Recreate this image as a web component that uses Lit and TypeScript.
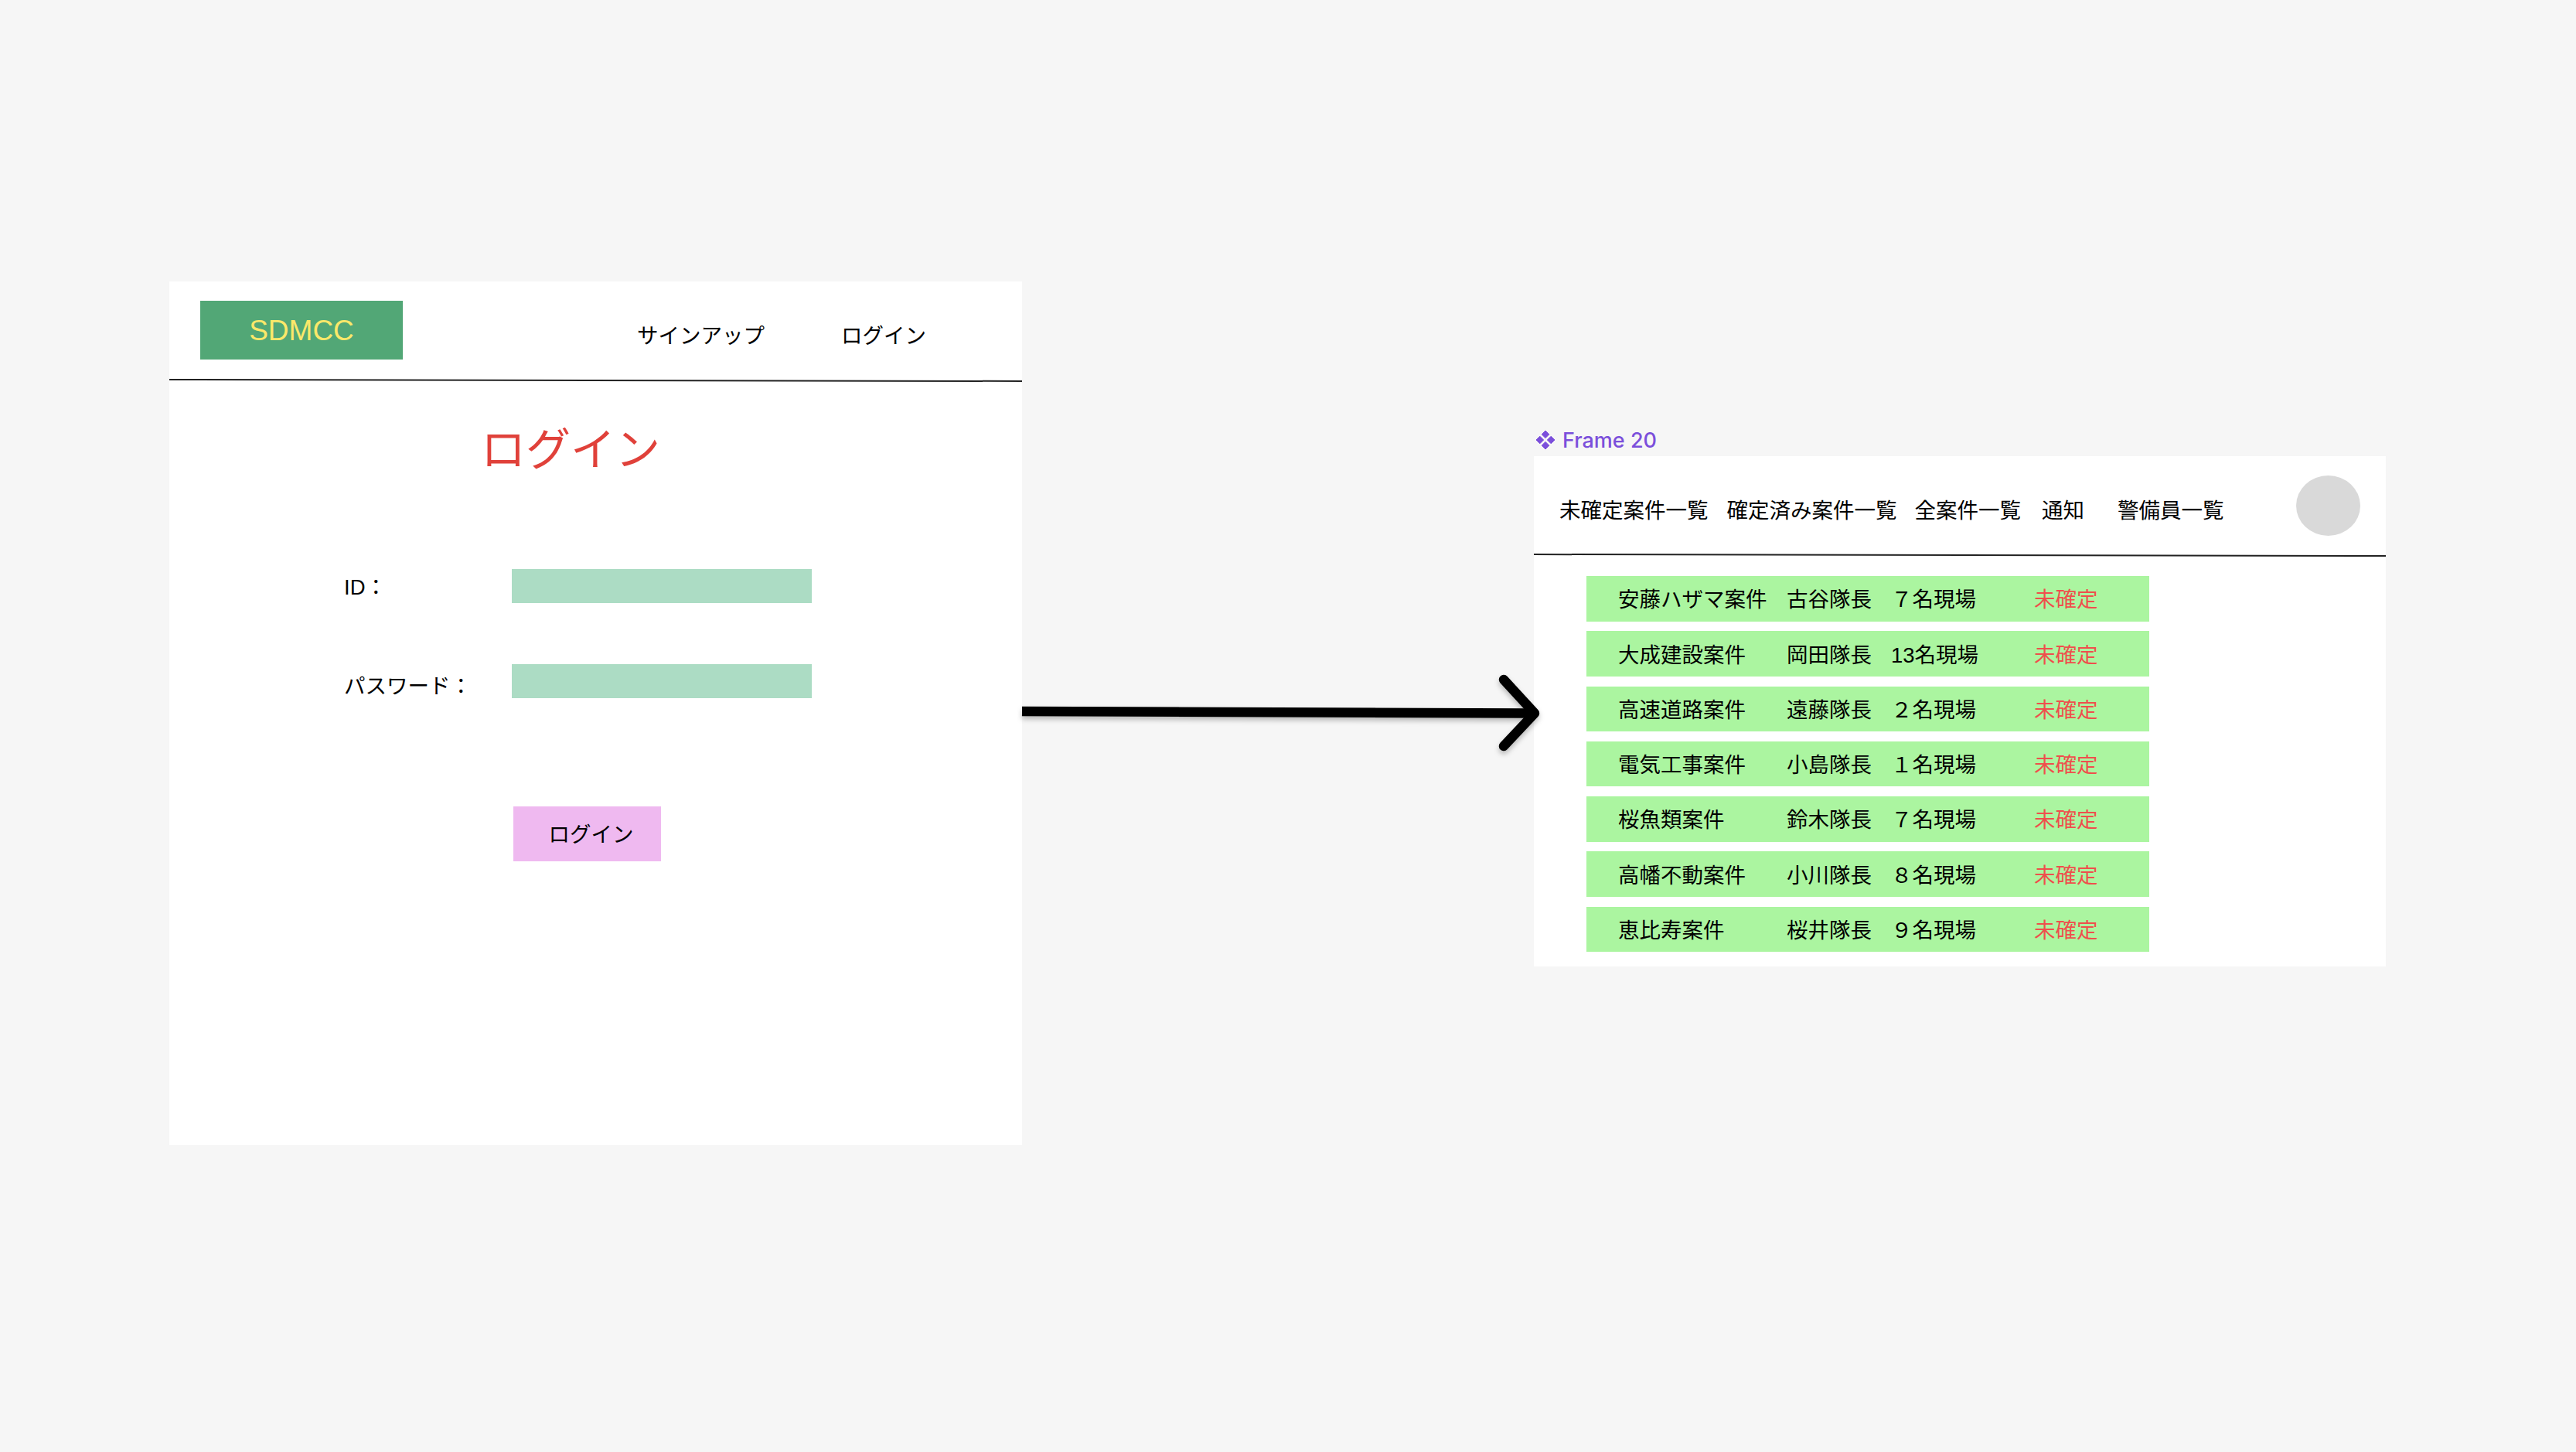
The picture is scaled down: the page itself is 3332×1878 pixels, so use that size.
import { LitElement, html, css } from 'lit';
import { customElement } from 'lit/decorators.js';

const CASES = [
  ['安藤ハザマ案件', '古谷隊長', '７名現場'],
  ['大成建設案件', '岡田隊長', '13名現場'],
  ['高速道路案件', '遠藤隊長', '２名現場'],
  ['電気工事案件', '小島隊長', '１名現場'],
  ['桜魚類案件', '鈴木隊長', '７名現場'],
  ['高幡不動案件', '小川隊長', '８名現場'],
  ['恵比寿案件', '桜井隊長', '９名現場'],
];

const NAV = ['未確定案件一覧', '確定済み案件一覧', '全案件一覧', '通知', '警備員一覧'];

@customElement('app-root')
export class AppRoot extends LitElement {
  static styles = css`
    :host {
      display: block;
      font-family: 'Liberation Sans', 'Noto Sans CJK JP', sans-serif;
      color: #000;
    }

    /* figma canvas: frames sit freely on it */
    .canvas {
      position: relative;
      width: 3332px;
      height: 1878px;
      background: #f6f6f6;
      overflow: hidden;
    }

    .frame {
      position: absolute;
      background: #fff;
      display: flex;
      flex-direction: column;
    }

    .login-frame {
      left: 219px;
      top: 364px;
      width: 1103px;
      height: 1117px;
    }

    .list-frame {
      left: 1984px;
      top: 590px;
      width: 1102px;
      height: 660px;
    }

    .frame-label {
      position: absolute;
      left: 1986px;
      top: 552px;
      height: 34px;
      display: flex;
      align-items: center;
      gap: 9px;
      font-family: Inter, sans-serif;
      font-size: 27px;
      font-weight: 500;
      color: #7b4fdb;
    }

    .frame-label svg {
      width: 26px;
      height: 26px;
      display: block;
    }

    /* goes after the list frame, its tip overlaps the frame edge */
    .arrow {
      position: absolute;
      left: 1310px;
      top: 865px;
      width: 700px;
      height: 115px;
      filter: drop-shadow(0 4px 3px rgba(0, 0, 0, 0.25));
    }

    .divider {
      height: 2px;
      background: #222;
      transform: rotate(0.1deg);
      flex: none;
    }

    .login-header {
      height: 127px;
      flex: none;
      display: flex;
      align-items: flex-start;
      padding-left: 40px;
    }

    .logo {
      width: 262px;
      height: 76px;
      margin-top: 25px;
      padding-top: 1px;
      box-sizing: border-box;
      display: flex;
      align-items: center;
      justify-content: center;
      background: #52a776;
      color: #fbe86a;
      font-size: 37px;
    }

    .login-nav {
      display: flex;
      gap: 99px;
      margin: 53px 0 0 303px;
      font-size: 27.5px;
      line-height: 36px;
    }

    .login-body {
      display: flex;
      flex-direction: column;
    }

    .title {
      margin: 53px 0 0 403px;
      font-size: 58px;
      line-height: 72px;
      color: #e0413a;
    }

    .form {
      margin: 118px 0 0 226px;
      display: grid;
      grid-template-columns: 217px 388px;
      row-gap: 79px;
      font-size: 27.5px;
    }

    .field-label {
      display: flex;
      align-items: center;
      padding-bottom: 3px;
    }

    .field-label.pw {
      padding: 6px 0 0;
    }

    .input {
      height: 44px;
      background: #acdcc4;
    }

    .submit {
      width: 191px;
      height: 71px;
      margin: 138px 0 0 445px;
      display: flex;
      align-items: center;
      justify-content: center;
      padding: 0 0 4px 10px;
      box-sizing: border-box;
      background: #efb9f0;
      font-size: 27.5px;
    }

    .list-header {
      height: 127px;
      flex: none;
      display: flex;
      align-items: flex-start;
      padding: 0 33px;
      font-size: 27.5px;
    }

    .list-nav {
      display: flex;
      margin-top: 51px;
      line-height: 40px;
    }

    .list-nav span:nth-child(1) {
      margin-right: 24px;
    }

    .list-nav span:nth-child(2) {
      margin-right: 23px;
    }

    .list-nav span:nth-child(3) {
      margin-right: 27px;
    }

    .list-nav span:nth-child(4) {
      margin-right: 43px;
    }

    .avatar {
      width: 83px;
      height: 78px;
      margin: 25px 0 0 auto;
      border-radius: 50%;
      background: #d9d9d9;
    }

    .rows {
      display: flex;
      flex-direction: column;
      gap: 12.8px;
      margin: 26px 0 0 68px;
      width: 728px;
    }

    .row {
      height: 58.5px;
      display: grid;
      grid-template-columns: 218px 135px 185px auto;
      align-items: center;
      padding: 0 0 2px 41px;
      box-sizing: border-box;
      background: #abf5a0;
      font-size: 27.5px;
    }

    .status {
      color: #ef4f4c;
    }
  `;

  render() {
    return html`
      <div class="canvas">
        <section class="frame login-frame">
          <header class="login-header">
            <div class="logo">SDMCC</div>
            <nav class="login-nav">
              <span>サインアップ</span>
              <span>ログイン</span>
            </nav>
          </header>
          <div class="divider"></div>
          <div class="login-body">
            <div class="title">ログイン</div>
            <div class="form">
              <div class="field-label">ID：</div>
              <div class="input"></div>
              <div class="field-label pw">パスワード：</div>
              <div class="input"></div>
            </div>
            <div class="submit">ログイン</div>
          </div>
        </section>

        <div class="frame-label">
          <svg viewBox="0 0 26 26" fill="currentColor" stroke="currentColor" stroke-width="1" stroke-linejoin="round">
            <path d="M13 1 L17.8 5.8 L13 10.6 L8.2 5.8 Z" />
            <path d="M5.8 8.2 L10.6 13 L5.8 17.8 L1 13 Z" />
            <path d="M20.2 8.2 L25 13 L20.2 17.8 L15.4 13 Z" />
            <path d="M13 15.4 L17.8 20.2 L13 25 L8.2 20.2 Z" />
          </svg>
          <span>Frame 20</span>
        </div>

        <section class="frame list-frame">
          <header class="list-header">
            <nav class="list-nav">
              ${NAV.map((n) => html`<span>${n}</span>`)}
            </nav>
            <div class="avatar"></div>
          </header>
          <div class="divider"></div>
          <div class="rows">
            ${CASES.map(
              ([name, leader, size]) => html`
                <div class="row">
                  <span>${name}</span>
                  <span>${leader}</span>
                  <span>${size}</span>
                  <span class="status">未確定</span>
                </div>
              `
            )}
          </div>
        </section>

        <svg class="arrow" viewBox="0 0 700 115" fill="none" stroke="#000" stroke-width="12.5">
          <path d="M12 55 L670 57.5" />
          <path d="M635 14 L675 57.5 L635 100" stroke-linecap="round" stroke-linejoin="round" />
        </svg>
      </div>
    `;
  }
}
